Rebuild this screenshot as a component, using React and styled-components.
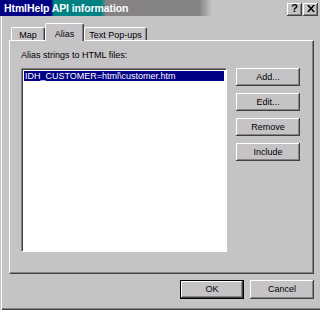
import React from "react";
import styled, { createGlobalStyle } from "styled-components";

const colors = {
  face: "#c6c3c6",
  shadow: "#848284",
  dark: "#424142",
  white: "#ffffff",
  navy: "#000084",
  teal: "#008284",
};

const GlobalStyle = createGlobalStyle`
  html, body {
    margin: 0;
    padding: 0;
    background: ${colors.face};
  }
  body {
    font-family: "Liberation Sans", Arial, sans-serif;
    font-size: 9px;
    color: #000;
  }
`;

const Window = styled.div`
  width: 320px;
  height: 310px;
  background: ${colors.face};
  display: flex;
  flex-direction: column;
  box-sizing: border-box;
  box-shadow: inset 0 -1px ${colors.dark}, inset 0 -2px ${colors.shadow};
  overflow: hidden;
`;

const TitleBar = styled.div`
  height: 16px;
  flex: none;
  display: flex;
  align-items: center;
  padding: 0 2px 0 4px;
  background: linear-gradient(
    to right,
    ${colors.navy} 0,
    ${colors.navy} 51px,
    ${colors.teal} 54px,
    ${colors.teal} 101px,
    ${colors.shadow} 106px,
    ${colors.shadow} 199px,
    ${colors.face} 212px
  );
`;

const Title = styled.span`
  color: ${colors.white};
  font-weight: bold;
  font-size: 10.5px;
  letter-spacing: -0.1px;
  white-space: nowrap;
`;

const CaptionButtons = styled.div`
  margin-left: auto;
  display: flex;
  gap: 1px;
  margin-top: 2px;
`;

const CaptionButton = styled.div`
  width: 15px;
  height: 13px;
  box-sizing: border-box;
  background: ${colors.face};
  box-shadow: inset -1px -1px ${colors.dark}, inset 1px 1px ${colors.white},
    inset -2px -2px ${colors.shadow};
  display: flex;
  align-items: center;
  justify-content: center;
  font-weight: bold;
  font-size: 11px;
  line-height: 1;
  padding-bottom: 1px;
`;

const Body = styled.div`
  flex: 1;
  display: flex;
  flex-direction: column;
  padding: 7px 6px 0 9px;
  box-shadow: inset 1px 0 ${colors.face}, inset 2px 0 ${colors.white};
`;

const TabStrip = styled.div`
  display: flex;
  align-items: flex-end;
  height: 17px;
  padding-left: 2px;
`;

const Tab = styled.div`
  position: relative;
  z-index: ${(p) => (p.$active ? 1 : 0)};
  width: ${(p) => p.$width}px;
  height: ${(p) => (p.$active ? 18 : 13)}px;
  margin-bottom: ${(p) => (p.$active ? -1 : 0)}px;
  box-sizing: border-box;
  background: ${colors.face};
  border-top: 1px solid ${colors.white};
  border-left: 1px solid ${colors.white};
  border-right: 1px solid ${colors.dark};
  box-shadow: inset -1px 0 ${colors.shadow};
  border-radius: 2px 2px 0 0;
  display: flex;
  justify-content: center;
  padding-top: ${(p) => (p.$active ? 5 : 2)}px;
  white-space: nowrap;
`;

const Panel = styled.div`
  height: 234px;
  box-sizing: border-box;
  border-top: 1px solid ${colors.white};
  border-left: 1px solid ${colors.white};
  border-right: 1px solid ${colors.dark};
  border-bottom: 1px solid ${colors.dark};
  box-shadow: inset -1px -1px ${colors.shadow};
  display: grid;
  grid-template-columns: 206px 64px;
  grid-template-rows: 27px 184px;
  column-gap: 9px;
  padding: 0 0 0 11px;
`;

const Label = styled.div`
  grid-column: 1 / span 2;
  padding-top: 9px;
  white-space: nowrap;
`;

const ListBox = styled.div`
  box-sizing: border-box;
  background: ${colors.white};
  border-top: 1px solid ${colors.shadow};
  border-left: 1px solid ${colors.shadow};
  border-right: 1px solid ${colors.white};
  border-bottom: 1px solid ${colors.white};
  box-shadow: inset 1px 1px ${colors.dark};
  padding: 2px 2px;
`;

const ListItem = styled.div`
  height: 10px;
  line-height: 10px;
  padding-left: 1px;
  background: ${(p) => (p.$selected ? colors.navy : "transparent")};
  color: ${(p) => (p.$selected ? colors.white : "#000")};
  white-space: nowrap;
`;

const SideButtons = styled.div`
  display: flex;
  flex-direction: column;
  gap: 7px;
`;

const Button = styled.div`
  width: 64px;
  height: ${(p) => p.$height || 18}px;
  box-sizing: border-box;
  background: ${colors.face};
  display: flex;
  align-items: center;
  justify-content: center;
  border: ${(p) => (p.$default ? `1px solid #000` : "none")};
  box-shadow: inset -1px -1px ${colors.dark}, inset 1px 1px ${colors.white},
    inset -2px -2px ${colors.shadow};
  padding-bottom: 1px;
`;

const Footer = styled.div`
  display: flex;
  justify-content: flex-end;
  gap: 6px;
  margin-top: 6px;
`;

const CloseGlyph = () => (
  <svg width="8" height="7" viewBox="0 0 8 7">
    <path d="M0 0h2l2 2.5L6 0h2L5 3.5 8 7H6L4 4.5 2 7H0l3-3.5z" fill="#000" />
  </svg>
);

const App = () => (
  <>
    <GlobalStyle />
    <Window>
      <TitleBar>
        <Title>HtmlHelp API information</Title>
        <CaptionButtons>
          <CaptionButton>?</CaptionButton>
          <CaptionButton>
            <CloseGlyph />
          </CaptionButton>
        </CaptionButtons>
      </TitleBar>
      <Body>
        <TabStrip>
          <Tab $width={34}>Map</Tab>
          <Tab $width={39} $active>
            Alias
          </Tab>
          <Tab $width={63}>Text Pop-ups</Tab>
        </TabStrip>
        <Panel>
          <Label>Alias strings to HTML files:</Label>
          <ListBox>
            <ListItem $selected>IDH_CUSTOMER=html\customer.htm</ListItem>
          </ListBox>
          <SideButtons>
            <Button>Add...</Button>
            <Button>Edit...</Button>
            <Button>Remove</Button>
            <Button>Include</Button>
          </SideButtons>
        </Panel>
        <Footer>
          <Button $height={19} $default>
            OK
          </Button>
          <Button $height={19}>Cancel</Button>
        </Footer>
      </Body>
    </Window>
  </>
);

export default App;
